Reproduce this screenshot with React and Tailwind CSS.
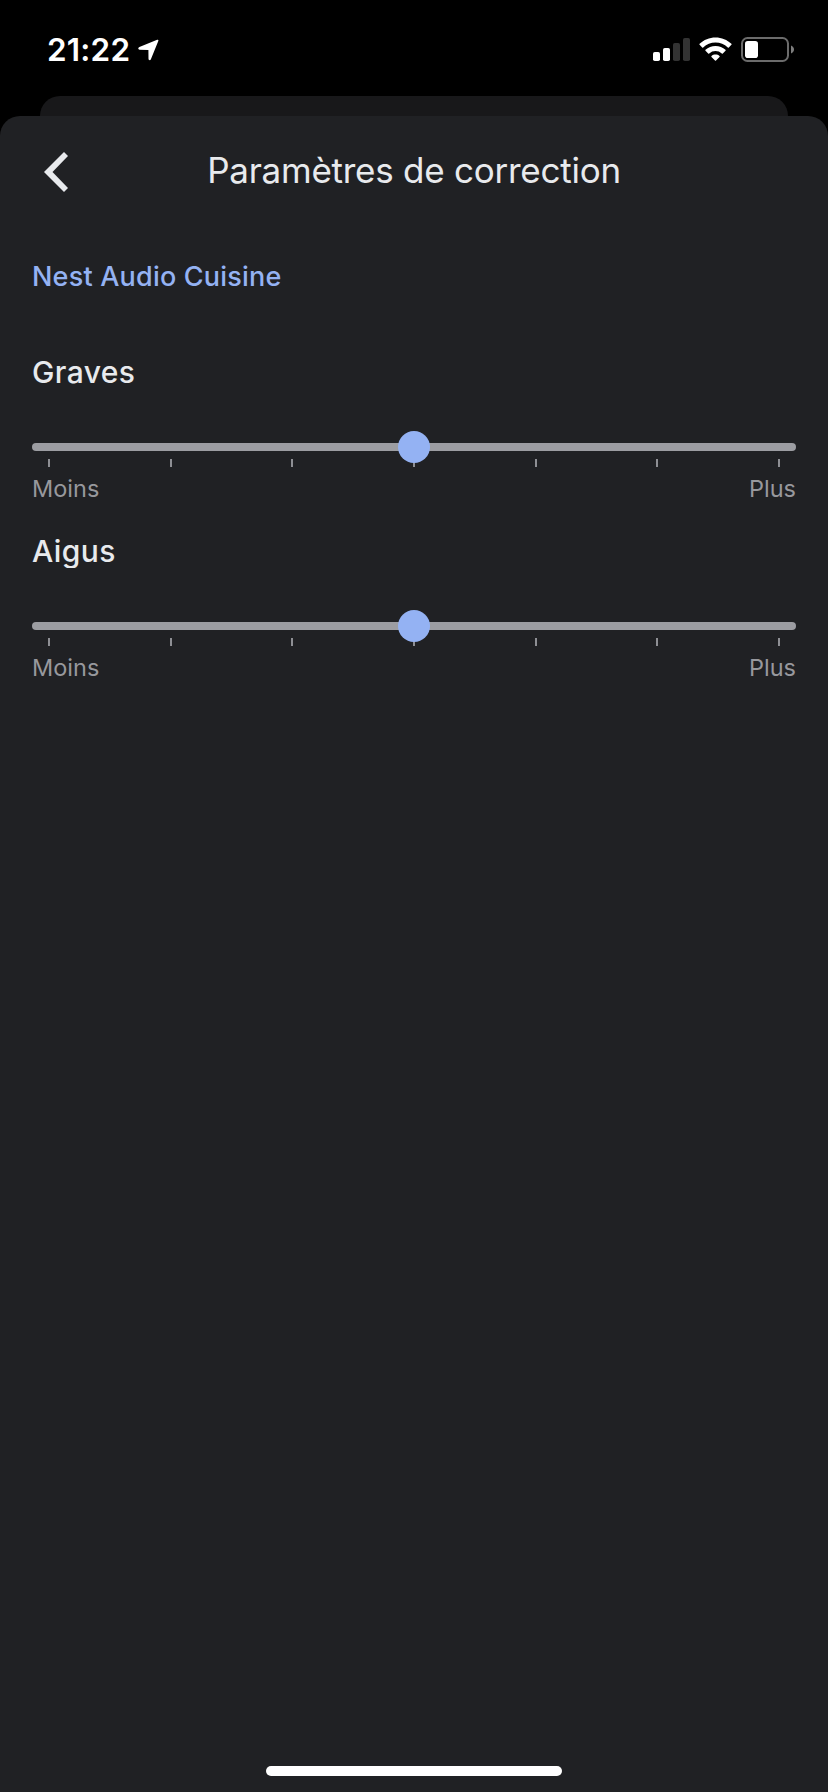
const TICKS = [0, 1, 2, 3, 4, 5, 6]

function StatusBar() {
  return (
    <div className="flex h-24 flex-shrink-0 items-start justify-between pl-[47px] pr-[33px] text-white">
      <div className="flex pt-[30px]">
        <span className="w-[91px] whitespace-nowrap text-[31.5px] font-semibold leading-10 tracking-[0.2px]">21:22</span>
        <svg className="mt-[9px] h-[22px] w-[22px]" viewBox="0 0 22 22" fill="currentColor">
          <path d="M19.2 0.8 Q20.8 0.4 20.3 2 L12.9 20.2 Q12.1 21.8 10.8 20.8 Q10.5 20.5 10.5 19.8 L10.4 11 L1.6 10.7 Q-0.2 10.2 0.4 9 Q0.6 8.5 1.4 8.1 Z" />
        </svg>
      </div>
      <svg className="mt-[36px] h-[27px] w-[142px]" viewBox="653 36 142 27">
        <rect x="653" y="52" width="7" height="9" rx="1.8" fill="#fff" />
        <rect x="663" y="48" width="7" height="13" rx="1.8" fill="#fff" />
        <rect x="673" y="43" width="7" height="18" rx="1.8" fill="#333" />
        <rect x="683" y="38" width="7" height="23" rx="1.8" fill="#333" />
        <path d="M715.5 37.5c6.1 0 11.7 2.3 15.9 6.3q.5.5 0 1l-2.6 2.6q-.5.5-1 0a18 18 0 0 0-24.6 0q-.5.5-1 0l-2.6-2.6q-.5-.5 0-1c4.2-4 9.8-6.3 15.9-6.3z" fill="#fff" />
        <path d="M715.5 46c3.8 0 7.3 1.4 10 3.8q.5.5 0 1l-2.7 2.7q-.5.4-1 0a9.4 9.4 0 0 0-12.6 0q-.5.4-1 0l-2.7-2.7q-.5-.5 0-1c2.7-2.4 6.2-3.8 10-3.8z" fill="#fff" />
        <path d="M715.5 54.5c1.5 0 2.9.5 4 1.4q.5.5 0 1l-3.5 3.7q-.5.5-1 0l-3.5-3.7q-.5-.5 0-1c1.1-.9 2.5-1.4 4-1.4z" fill="#fff" />
        <rect x="742" y="38" width="46" height="23" rx="5.5" fill="none" stroke="#6b6b6b" strokeWidth="2" />
        <rect x="745" y="41" width="13" height="17" rx="2.8" fill="#fff" />
        <path d="M791 45.5c4 1.5 4 6.5 0 8z" fill="#7d7d7d" />
      </svg>
    </div>
  )
}

function Equalizer({ label, className }) {
  return (
    <section className={className}>
      <h3 className="h-[37px] overflow-hidden whitespace-nowrap text-[30px] font-medium leading-10 tracking-[0.4px] text-[#e8eaed]">{label}</h3>
      <div className="relative mt-[54px] h-2 rounded-full bg-[#9c9da2]">
        <div className="absolute -top-3 left-1/2 z-10 h-8 w-8 -translate-x-1/2 rounded-full bg-[#94b2f3]" />
      </div>
      <div className="mt-2 flex justify-between px-4">
        {TICKS.map(tick => (
          <span key={tick} className="h-2 w-0.5 bg-[#8e8f94]" />
        ))}
      </div>
      <div className="mt-1.5 flex justify-between text-[23.5px] leading-8 text-[#97989d]">
        <span>Moins</span>
        <span>Plus</span>
      </div>
    </section>
  )
}

export default function App() {
  return (
    <div className="flex h-[1792px] w-[828px] flex-col overflow-hidden bg-black font-['Inter',sans-serif]">
      <StatusBar />
      <div className="mx-10 h-5 flex-shrink-0 rounded-t-[20px] bg-[#18181a]" />
      <main className="flex flex-1 flex-col rounded-t-[20px] bg-[#202124]">
        <header className="grid h-28 grid-cols-[100px_1fr_100px] items-center">
          <button className="ml-11">
            <svg className="h-10 w-6" viewBox="0 0 24 40" fill="#e8eaed">
              <path d="M20 0 L24 4 L8.5 20 L24 36 L20 40 L0 20 Z" />
            </svg>
          </button>
          <h1 className="pb-[5px] whitespace-nowrap text-center text-[35px] font-normal leading-10 tracking-[-0.25px] text-[#e8eaed]">Paramètres de correction</h1>
        </header>
        <div className="px-8">
          <h2 className="mt-[29px] whitespace-nowrap text-[27px] font-medium leading-10 tracking-[0.2px] text-[#94b2f3]">Nest Audio Cuisine</h2>
          <Equalizer label="Graves" className="mt-[55px]" />
          <Equalizer label="Aigus" className="mt-[26px]" />
        </div>
        <div className="mx-auto mb-4 mt-auto h-2.5 w-[296px] rounded-full bg-white" />
      </main>
    </div>
  )
}
